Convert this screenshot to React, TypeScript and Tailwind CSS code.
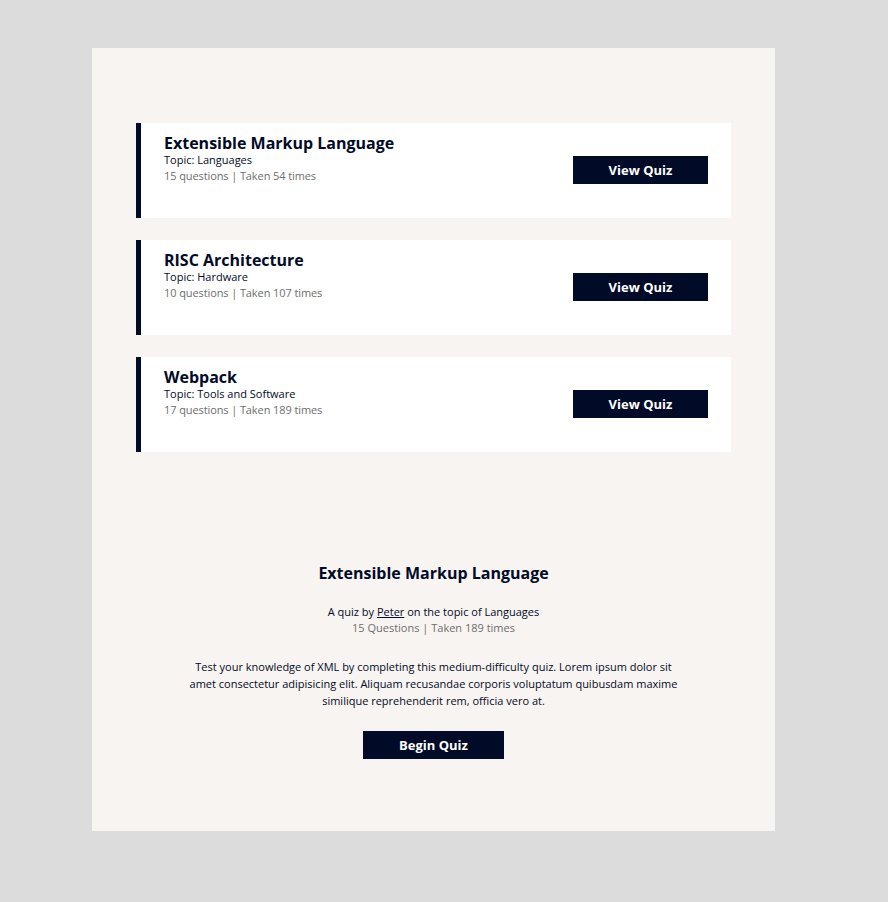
import React from "react";

const quizzes = [
  { title: "Extensible Markup Language", topic: "Languages", q: 15, taken: 54 },
  { title: "RISC Architecture", topic: "Hardware", q: 10, taken: 107 },
  { title: "Webpack", topic: "Tools and Software", q: 17, taken: 189 },
];

export default function App() {
  return (
    <div
      className="min-h-[902px] w-full bg-[#dcdcdc] pt-[48px] pl-[92px]"
      style={{ fontFamily: '"Open Sans", "Noto Sans", sans-serif' }}
    >
      <div className="w-[683px] h-[783px] bg-[#f8f4f1] px-[44px] pt-[75px]">
        <div className="flex flex-col gap-[22px]">
          {quizzes.map((q) => (
            <div
              key={q.title}
              className="h-[95px] bg-white border-l-[5px] border-[#010b27] flex justify-between pl-[23px] pr-[23px]"
            >
              <div className="pt-[10px]">
                <div className="text-[16px] font-bold leading-[20px] text-[#010b27]">{q.title}</div>
                <div className="text-[11px] leading-[14px] text-[#010b27]">Topic: {q.topic}</div>
                <div className="text-[11px] leading-[16px] text-[#6e6e6e] mt-[1px] tracking-[-0.1px]">
                  {q.q} questions | Taken {q.taken} times
                </div>
              </div>
              <button className="self-start mt-[33px] w-[135px] h-[28px] pt-[2px] bg-[#010b27] text-white text-[13px] font-bold">
                View Quiz
              </button>
            </div>
          ))}
        </div>
        <div className="flex flex-col items-center mt-[110px]">
          <div className="text-[16px] font-bold leading-[22px] text-[#010b27]">Extensible Markup Language</div>
          <div className="mt-[20px] text-[11px] leading-[16px] text-[#010b27]">
            A quiz by <span className="underline">Peter</span> on the topic of Languages
          </div>
          <div className="text-[11px] leading-[16px] text-[#6e6e6e]">15 Questions | Taken 189 times</div>
          <p className="mt-[22px] w-[492px] text-center text-[11px] leading-[17px] text-[#010b27]">
            Test your knowledge of XML by completing this medium-difficulty quiz. Lorem ipsum dolor sit amet consectetur
            adipisicing elit. Aliquam recusandae corporis voluptatum quibusdam maxime similique reprehenderit rem, officia
            vero at.
          </p>
          <button className="mt-[22px] w-[141px] h-[28px] pt-[2px] bg-[#010b27] text-white text-[13px] font-bold">
            Begin Quiz
          </button>
        </div>
      </div>
    </div>
  );
}
